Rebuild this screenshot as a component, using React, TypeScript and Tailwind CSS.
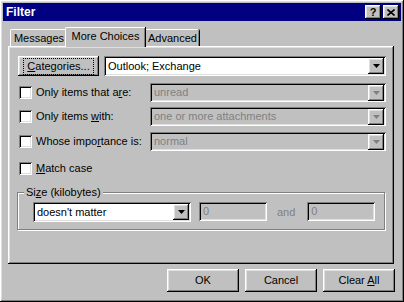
import React from "react";

const raised =
  "shadow-[inset_-1px_-1px_#000,inset_1px_1px_#fff,inset_-2px_-2px_#808080,inset_2px_2px_#dfdfdf]";
const sunken =
  "shadow-[inset_1px_1px_#808080,inset_-1px_-1px_#fff,inset_2px_2px_#000,inset_-2px_-2px_#dfdfdf]";

function Arrow({ disabled }: { disabled?: boolean }) {
  return (
    <div className={`w-[16px] h-[16px] bg-[#c0c0c0] ${raised} flex items-center justify-center shrink-0`}>
      <svg width="7" height="4" viewBox="0 0 7 4">
        <path d="M0 0H7L3.5 4Z" fill={disabled ? "#808080" : "#000"} />
      </svg>
    </div>
  );
}

function Combo({
  text,
  disabled,
  className,
}: {
  text: string;
  disabled?: boolean;
  className?: string;
}) {
  return (
    <div
      className={`${className ?? ""} ${sunken} ${disabled ? "bg-[#c0c0c0]" : "bg-white"} flex items-center p-[2px]`}
    >
      <div className={`flex-1 pl-[2px] truncate ${disabled ? "text-[#808080]" : "text-black"}`}>{text}</div>
      <Arrow disabled={disabled} />
    </div>
  );
}

function Check() {
  return <div className={`w-[13px] h-[13px] bg-white ${sunken} shrink-0`} />;
}

function Btn({ children, className }: { children: React.ReactNode; className?: string }) {
  return (
    <div className={`${className ?? ""} bg-[#c0c0c0] ${raised} flex items-center justify-center`}>{children}</div>
  );
}

export default function App() {
  return (
    <div
      className={`w-[404px] h-[302px] bg-[#c0c0c0] ${raised} p-[3px] flex flex-col text-[11px] leading-none text-black`}
      style={{ fontFamily: '"Liberation Sans", Arial, sans-serif' }}
    >
      {/* Title bar */}
      <div className="h-[18px] bg-[#000080] flex items-center justify-between pl-[3px] pr-[2px]">
        <span className="text-white font-bold text-[12px]">Filter</span>
        <div className="flex gap-[2px]">
          <Btn className="w-[16px] h-[14px] font-bold text-[11px]">?</Btn>
          <Btn className="w-[16px] h-[14px]">
            <svg width="8" height="7" viewBox="0 0 8 7">
              <path d="M0.5 0.5L7.5 6.5M7.5 0.5L0.5 6.5" stroke="#000" strokeWidth="1.6" />
            </svg>
          </Btn>
        </div>
      </div>

      {/* Tabs */}
      <div className="mt-[6px] ml-[5px] flex items-end h-[19px] relative z-10">
        <div className="h-[17px] w-[57px] border-t border-l border-white rounded-tl-[2px] shadow-[inset_-1px_0_#808080,1px_0_#000] flex items-center justify-center ml-[2px]">
          Messages
        </div>
        <div className="h-[20px] w-[80px] -ml-[2px] -mb-[1px] bg-[#c0c0c0] border-t border-l border-white rounded-tl-[2px] shadow-[inset_-1px_0_#808080,1px_0_#000] flex items-center justify-center pb-[2px]">
          More Choices
        </div>
        <div className="h-[17px] w-[53px] border-t border-white rounded-tr-[2px] shadow-[inset_-1px_0_#808080,1px_0_#000] flex items-center justify-center ml-[1px]">
          Advanced
        </div>
      </div>

      {/* Panel */}
      <div className={`ml-[5px] mr-[7px] h-[218px] ${raised} pl-[10px] pr-[8px] pt-[10px] flex flex-col`}>
        <div className="flex items-center h-[20px]">
          <Btn className="w-[81px] h-[20px]">
            <span className="border border-dotted border-black px-[3px] py-[2px]">
              <span className="underline">C</span>ategories...
            </span>
          </Btn>
          <Combo text="Outlook; Exchange" className="ml-[5px] flex-1 h-[20px]" />
        </div>

        <div className="flex items-center h-[19px] mt-[7px]">
          <div className="flex items-center w-[132px] pl-[1px]">
            <Check />
            <span className="ml-[4px]">
              Only items that a<span className="underline">r</span>e:
            </span>
          </div>
          <Combo text="unread" disabled className="flex-1 h-[19px]" />
        </div>

        <div className="flex items-center h-[19px] mt-[5px]">
          <div className="flex items-center w-[132px] pl-[1px]">
            <Check />
            <span className="ml-[4px]">
              Only items <span className="underline">w</span>ith:
            </span>
          </div>
          <Combo text="one or more attachments" disabled className="flex-1 h-[19px]" />
        </div>

        <div className="flex items-center h-[19px] mt-[6px]">
          <div className="flex items-center w-[132px] pl-[1px]">
            <Check />
            <span className="ml-[4px]">
              Whose impo<span className="underline">r</span>tance is:
            </span>
          </div>
          <Combo text="normal" disabled className="flex-1 h-[19px]" />
        </div>

        <div className="flex items-center h-[13px] mt-[11px] pl-[1px]">
          <Check />
          <span className="ml-[4px]">
            <span className="underline">M</span>atch case
          </span>
        </div>

        {/* Group box */}
        <div className="relative mt-[17px] ml-[-1px] mr-[1px] h-[38px] border border-[#808080] shadow-[1px_1px_#fff,inset_1px_1px_#fff] pl-[15px] pt-[9px] flex items-start">
          <span className="absolute -top-[6px] left-[6px] bg-[#c0c0c0] px-[2px]">
            Si<span className="underline">z</span>e (kilobytes)
          </span>
          <Combo text="doesn't matter" className="w-[158px] h-[20px]" />
          <div className={`ml-[8px] w-[68px] h-[19px] ${sunken} bg-[#c0c0c0] flex items-center pl-[4px] text-[#808080]`}>0</div>
          <span className="ml-[10px] mt-[5px] text-[#808080]">and</span>
          <div className={`ml-[12px] w-[68px] h-[19px] ${sunken} bg-[#c0c0c0] flex items-center pl-[4px] text-[#808080]`}>0</div>
        </div>
      </div>

      {/* Buttons */}
      <div className="flex justify-end gap-[6px] mt-[5px] mr-[6px]">
        <Btn className="w-[72px] h-[23px]">OK</Btn>
        <Btn className="w-[72px] h-[23px]">Cancel</Btn>
        <Btn className="w-[72px] h-[23px]">
          <span>
            Clear <span className="underline">A</span>ll
          </span>
        </Btn>
      </div>
    </div>
  );
}
